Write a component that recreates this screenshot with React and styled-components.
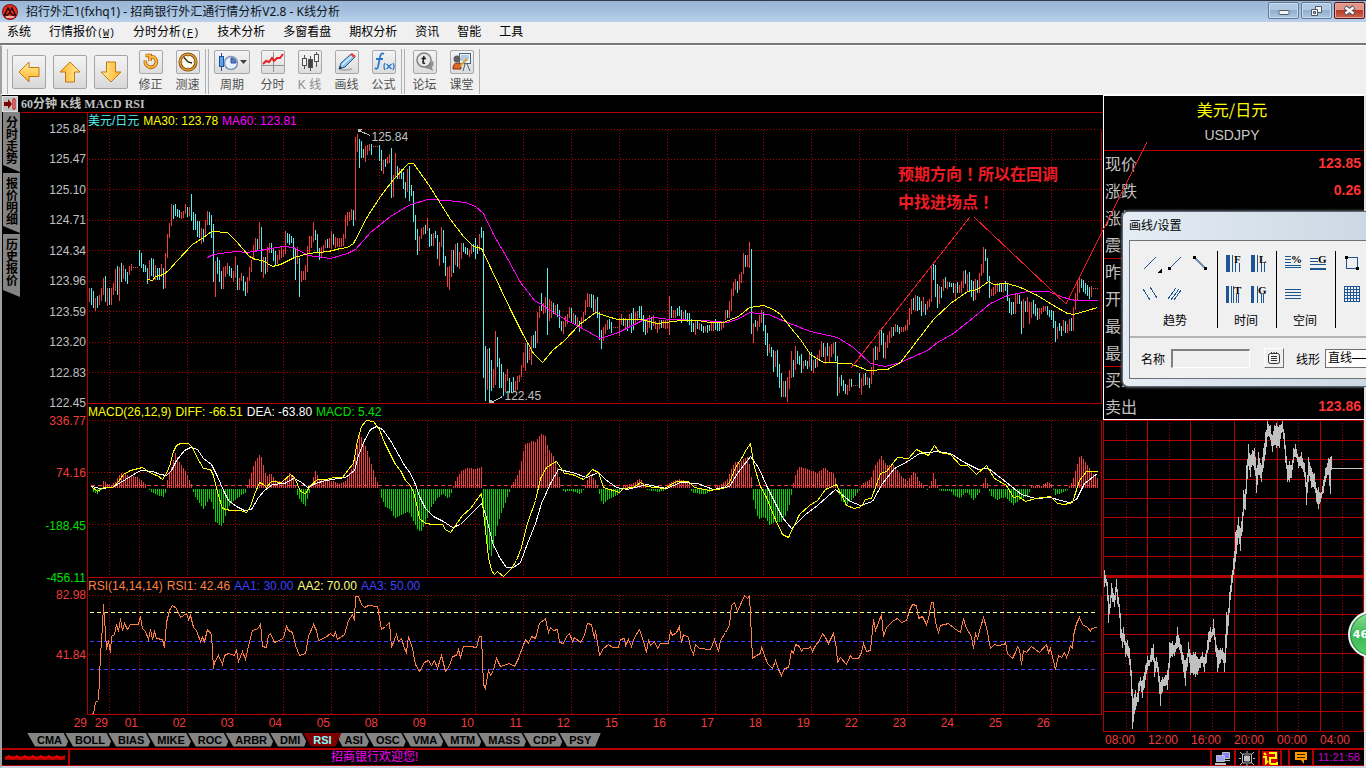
import React from "react";
import styled, { createGlobalStyle, css } from "styled-components";

const SONG = '"Liberation Sans", "Noto Sans CJK SC", sans-serif';
const RED = "#b40000";
const UP = "#f03c3c";
const DOWN = "#54f0f0";

const GlobalStyle = createGlobalStyle`
  * { box-sizing: border-box; }
  html, body { margin: 0; padding: 0; background: #000; }
  body { font-family: ${SONG}; font-size: 12px; color: #000; overflow: hidden; }
  button { font: inherit; padding: 0; margin: 0; border: 0; background: none; color: inherit; }
  svg { display: block; flex: none; }
`;

/* ---------- window frame ---------- */

const Window = styled.div`
  min-height: 100vh;
  display: flex;
  flex-direction: column;
  background: #000;
  position: relative;
  overflow: hidden;
`;

const TitleBar = styled.header`
  height: 22px;
  display: flex;
  align-items: center;
  padding: 0 1px 0 2px;
  gap: 8px;
  border-top: 1px solid #343a44;
  background: linear-gradient(#98b5d6, #a8c3e0 60%, #bad1ea);
`;

const WindowTitle = styled.h1`
  margin: 0;
  flex: 1;
  font: 400 12px/18px "Noto Sans", "Noto Sans CJK SC", sans-serif;
  color: #10141c;
`;

const WindowButtons = styled.div`
  display: flex;
  gap: 2px;
  align-self: flex-start;
  padding-top: 1px;
`;

const WindowButton = styled.button`
  width: 31px;
  height: 17px;
  display: flex;
  align-items: center;
  justify-content: center;
  border-radius: 2px;
  border: 1px solid ${(p) => (p.$close ? "#5c1420" : "#647896")};
  box-shadow: inset 0 0 0 1px ${(p) => (p.$close ? "#e8a898" : "#c8dcf0")};
  background: ${(p) =>
    p.$close
      ? "linear-gradient(#e0968a 45%, #b83c22 50%, #c86450)"
      : "linear-gradient(#b0c8e2 45%, #90aece 50%, #acc8e2)"};
`;

const MenuBar = styled.nav`
  height: 23px;
  display: flex;
  align-items: flex-start;
  gap: 18px;
  padding: 1px 7px 0;
  background: #f0f0f0;
  border-bottom: 2px solid #787878;
`;

const MenuItem = styled.button`
  font-size: 12px;
  line-height: 19px;
  white-space: nowrap;
`;

const Hotkey = styled.span`
  font: 10px/18px "Liberation Mono", monospace;
  u { text-underline-offset: 1px; }
`;

const ToolBar = styled.div`
  height: 50px;
  display: flex;
  align-items: stretch;
  padding: 3px 0 0 5px;
  background: #f0f0f0;
  border-left: 2px solid #a0a0a0;
  border-top: 1px solid #fff;
  border-bottom: 1px solid #fff;
`;

const ToolGroup = styled.div`
  display: flex;
  align-items: center;
  padding: 0 2px 0 4px;
  gap: 6px;
  border-left: 1px solid #b0b0b0;
  border-right: 1px solid #b0b0b0;
  margin-right: 2px;
`;

const ArrowButton = styled.button`
  width: 34px;
  height: 34px;
  margin: 0 1px 0 0;
  display: flex;
  align-items: center;
  justify-content: center;
  border: 1px solid #a4a4a4;
  border-radius: 2px;
  background: linear-gradient(#f4f4f4, #d8d8d8);
`;

const ToolItem = styled.button`
  width: ${(p) => (p.$wide ? 38 : 31)}px;
  display: flex;
  flex-direction: column;
  align-items: center;
  gap: 2px;
  font-size: 12px;
  line-height: 18px;
  white-space: nowrap;
  color: ${(p) => (p.$dim ? "#8c8c8c" : "#505050")};
`;

const ToolIcon = styled.span`
  width: ${(p) => (p.$wide ? 36 : 24)}px;
  height: 24px;
  display: flex;
  align-items: center;
  justify-content: center;
  border: 1px solid #a8a8a8;
  border-radius: 2px;
  background: linear-gradient(#f4f4f4, #dcdcdc);
`;

/* ---------- workspace ---------- */

const Workspace = styled.main`
  flex: 1;
  display: flex;
  position: relative;
  border-left: 2px solid #a0a0a0;
  border-right: 2px solid #e4e4e4;
  background: #000;
`;

const ChartSide = styled.section`
  flex: 1;
  min-width: 0;
  display: flex;
  flex-direction: column;
`;

const ChartHeader = styled.div`
  height: 17px;
  display: flex;
  align-items: center;
  gap: 3px;
`;

const PinButton = styled.button`
  width: 16px;
  height: 16px;
  background: #c0c0c0;
  border: 1px solid #e0e0e0;
`;

const ChartTitle = styled.h2`
  margin: 0;
  font: 700 12px/16px "Liberation Serif", "Noto Sans CJK SC", serif;
  color: #c0c0c0;
`;

const ChartBody = styled.div`
  display: flex;
`;

const SideTabs = styled.div`
  width: 19px;
  padding-left: 1px;
  display: flex;
  flex-direction: column;
  gap: 1px;
`;

const SideTab = styled.button`
  width: 17px;
  height: ${(p) => (p.$tall ? 63 : 60)}px;
  padding-top: 4px;
  display: flex;
  align-items: center;
  writing-mode: vertical-rl;
  white-space: nowrap;
  font: 700 12px/16px "Noto Sans CJK SC", sans-serif;
  background: #848484;
  clip-path: polygon(0 0, 100% 0, 100% 100%, 0 calc(100% - 7px));
`;

const Panes = styled.div`
  flex: 1;
  min-width: 0;
  border-top: 1px solid ${RED};
`;

const Pane = styled.div`
  display: flex;
  align-items: flex-start;
  height: ${(p) => p.$height}px;
`;

const Axis = styled.div`
  width: 66px;
  height: ${(p) => p.$height}px;
  margin-top: ${(p) => p.$top}px;
  display: flex;
  flex-direction: column;
  justify-content: space-between;
  text-align: right;
  line-height: 16px;
  flex: none;
  z-index: 1;
`;

const AxisLabel = styled.span`
  color: ${(p) => p.$color};
  padding-right: 1px;
`;

const Plot = styled.div`
  flex: 1;
  min-width: 0;
  height: 100%;
  border-left: 1px solid ${RED};
  display: flex;
  flex-direction: column;
`;

const PlotSvg = styled.svg`
  width: 100%;
  overflow: visible;
`;

const Legend = styled.div`
  height: ${(p) => p.$height || 16}px;
  line-height: ${(p) => p.$height || 16}px;
  display: flex;
  gap: 4px;
  white-space: nowrap;
`;

const LegendItem = styled.span`
  color: ${(p) => p.$color};
`;

const DateRow = styled.div`
  display: grid;
  grid-template-columns: 67px 21fr 30fr repeat(19, 48fr) 52fr;
  color: ${UP};
  line-height: 16px;
  text-align: right;
  span { padding-right: 1px; }
`;

const IndicatorTabs = styled.div`
  display: flex;
  padding-left: 23px;
  margin-top: 1px;
`;

const IndicatorTab = styled.button`
  height: 15px;
  margin-right: -9px;
  padding-left: 2px;
  background: #000;
  position: relative;
  z-index: ${(p) => (p.$active ? 2 : 1)};
  clip-path: polygon(0 0, 100% 0, calc(100% - 6px) 100%, 8px 100%);
  span {
    display: block;
    height: 14px;
    padding: 0 10px;
    font: 700 11px/15px "Liberation Sans", sans-serif;
    color: ${(p) => (p.$active ? "#80ffff" : "#000")};
    background: ${(p) => (p.$active ? "#800000" : "#848484")};
    clip-path: polygon(0 0, 100% 0, calc(100% - 6px) 100%, 8px 100%);
  }
`;

/* ---------- quote side ---------- */

const QuoteSide = styled.aside`
  width: 261px;
  flex: none;
`;

const QuotePanel = styled.div`
  height: 325px;
  border: solid #fff;
  border-width: 1px 0 1px 1px;
`;

const QuoteHead = styled.div`
  height: 55px;
  text-align: center;
  padding-right: 4px;
  border-bottom: 1px solid ${RED};
`;

const PairName = styled.div`
  font: 400 16px/27px "Noto Sans CJK SC", sans-serif;
  color: #ffff00;
`;

const PairCode = styled.div`
  font-size: 14px;
  line-height: 25px;
  color: #c8c8c8;
`;

const QuoteRow = styled.div`
  height: 27px;
  padding: 0 3px 3px 1px;
  display: flex;
  justify-content: space-between;
  align-items: center;
  ${(p) => p.$divided && css`border-bottom: 1px solid ${RED};`}
`;

const QuoteLabel = styled.span`
  font: 400 16px/24px "Noto Sans CJK SC", sans-serif;
  color: #c0c0c0;
`;

const QuoteValue = styled.span`
  font-size: 14px;
  font-weight: 700;
  color: #ff3232;
`;

const TimeRow = styled.div`
  display: flex;
  padding-left: 2px;
  line-height: 16px;
  color: ${UP};
  span { flex: 0 0 43px; white-space: nowrap; }
`;

/* ---------- overlays ---------- */

const Annotation = styled.div`
  position: absolute;
  left: 896px;
  top: 64px;
  width: 180px;
  font: 700 16px/28px "Noto Sans CJK TC", sans-serif;
  color: #ee1c24;
`;

const TrendOverlay = styled.svg`
  position: absolute;
  left: 0;
  top: 0;
  width: 100%;
  height: 100%;
  pointer-events: none;
`;

const Dialog = styled.section`
  position: absolute;
  right: -2px;
  top: 116px;
  width: 244px;
  height: 176px;
  padding: 0 0 7px 6px;
  display: flex;
  flex-direction: column;
  border: 1px solid #5c6670;
  border-right: 0;
  border-radius: 6px 0 0 6px;
  background: linear-gradient(90deg, #e4ecf4, #ccd8e4);
  box-shadow: 0 0 3px #a0a8b0;
`;

const DialogTitle = styled.h3`
  margin: 0;
  font: 400 12px/28px "Noto Sans", "Noto Sans CJK SC", sans-serif;
`;

const DialogBody = styled.div`
  flex: 1;
  background: #f0f0f0;
  border: 1px solid #6c7278;
  border-right: 0;
  display: flex;
  flex-direction: column;
`;

const DrawTools = styled.div`
  height: 97px;
  display: flex;
  padding: 10px 0 8px 9px;
  border-bottom: 2px solid #b4b4b4;
`;

const DrawGroup = styled.div`
  width: ${(p) => p.$width}px;
  flex: none;
  padding-left: ${(p) => p.$indent}px;
  border-right: 1px solid #000;
  display: flex;
  flex-direction: column;
  gap: 7px;
`;

const DrawRow = styled.div`
  display: flex;
  gap: 1px;
  height: 24px;
`;

const DrawButton = styled.button`
  width: 24px;
  height: 24px;
`;

const DrawCaption = styled.div`
  line-height: 16px;
  padding-left: ${(p) => p.$indent}px;
`;

const DialogForm = styled.div`
  flex: 1;
  display: flex;
  align-items: center;
  padding-left: 11px;
  overflow: hidden;
`;

const NameInput = styled.input`
  width: 79px;
  flex: none;
  height: 19px;
  margin: 0 14px 0 6px;
  background: #f0f0f0;
  border: 1px solid #fff;
  border-top: 2px solid #808080;
  border-left: 2px solid #808080;
  font: 12px ${SONG};
`;

const ListButton = styled.button`
  width: 20px;
  flex: none;
  height: 20px;
  margin-right: 12px;
  display: flex;
  align-items: center;
  justify-content: center;
  border: 1px solid #fff;
  border-right-color: #707070;
  border-bottom-color: #707070;
`;

const LineSelect = styled.select`
  width: 90px;
  flex: none;
  height: 19px;
  margin-left: 5px;
  padding: 0 0 0 2px;
  background: #fff;
  border: 1px solid #707070;
  border-radius: 0;
  appearance: none;
  font: 12px ${SONG};
`;

const FieldLabel = styled.label`
  flex: none;
`;

const SpeedBall = styled.button`
  position: absolute;
  right: -31px;
  top: 516px;
  width: 47px;
  height: 47px;
  padding-right: 22px;
  border: 2px solid #f4f4f4;
  border-radius: 50%;
  box-shadow: inset 0 0 0 1px #208040;
  background: linear-gradient(#90e090, #3cb858 50%, #54d068);
  font: 700 11px "DejaVu Sans", sans-serif;
  color: #fff;
`;

/* ---------- status bar ---------- */

const StatusBar = styled.footer`
  height: 20px;
  display: flex;
  border: solid #a0a0a0;
  border-width: 0 2px 2px 2px;
  border-bottom-color: #c4d4e4;
  border-right-color: #e4e4e4;
  box-shadow: inset 0 2px ${RED}, inset 0 -1px ${RED};
  background: #000;
`;

const StatusCell = styled.div`
  width: ${(p) => p.$width}px;
  padding-top: 2px;
  display: flex;
  align-items: center;
  justify-content: center;
  border-right: ${(p) => (p.$last ? 0 : 2)}px solid ${RED};
  flex: none;
`;

const StatusMessage = styled.div`
  flex: 1;
  padding: 1px 0 0 261px;
  line-height: 16px;
  color: #ff00ff;
  border-right: 2px solid ${RED};
`;

const Clock = styled.time`
  font-size: 11px;
  line-height: 14px;
  padding-bottom: 2px;
  color: #c800c8;
`;

/* ---------- data ---------- */

const candleRuns = [
  [89, "r287301 c287304 c290307 r297310 c295307 r294304 r287300 r277294 c275301 r287305 c287304 r287304 r282294 r268290 c265294 r266300 c262281 r264278 c268280 c271283 r265274 r263270 d267 d267 d267"],
  [139, "c249265 c252267 c263271 c264271 c267283 r259279 c257275 c258276 r264279 c267279 c267279 r263276 c267288 r252287 r233257 r222237 r203225 c204218 c203215 c208216 c209217 r211218 r210217 r203213"],
  [187, "c206216 r206215 c193220 c211229 c213229 c220236 c220237 r227243 c228241 r219236 r210224 c211224 c214237 c223281 r260296 c256273 c259281 c270288 r266288 r265276 r262273 c265275 c267277 r270281"],
  [235, "r256277 c264289 r277289 r272280 c275290 c281295 r276292 r266280 r259271 r244259 r237250 c238250 r221248 c226271 r256277 c256273 r246271 r242252 c242252 c247260 c250264 r254263 r249259 r246257"],
  [283, "r248256 r230253 c232242 c233244 c235242 c237258 c248279 r246263 c257296 r270281 r270279 r264279 r245271 r235252 r235247 r221241 c229239 c233252 c247259 r246256 r244252 r239247 c238247 r237247"],
  [331, "r230248 c233244 r236247 r237246 r237246 r237246 r233245 r214238 r211225 r211220 r208219 c209225 r136219 r133151 c138167 c140157 c148157 r145161 r144154 r143150 c143154 d146 d146 d146"],
  [379, "c144160 c149170 r159173 c158166 r156163 r153162 c147197 r174196 r152177 c165178 r167178 c168178 c171188 c181197 r168191 c165200 c184195 c190221 c214239 c228254 r235250 r227238 r226234 c224233"],
  [427, "r217230 c227246 c233245 r232245 c230237 c234258 r241265 r226246 c229262 c255275 r266286 r265289 r249276 c249272 r243264 c242266 r251268 r242258 c242251 c246253 c247254 r249256 r243253 c243251"],
  [475, "c237258 c244253 r233250 c226237 c230377 c345400 r348389 c347402 c359390 r368387 r330384 c336366 c357387 c363387 c371395 r373391 r368380 c377392 c381392 c376391 r380390 r375389 r374381 r364376"],
  [523, "r352366 r342370 c342362 r347359 r335364 c334347 c330347 r311342 r305317 c292310 r302313 r296312 c267334 r298320 r300317 c302313 r304314 c303316 c309327 c320330 r320333 r315326 r313323 r306317"],
  [571, "c307322 r312323 c314324 r316325 c320331 r316327 r311322 r299314 r292306 r293306 c293307 c294311 r298313 c296317 c311339 c329348 r326340 r323333 r319329 c318328 c321332 d327 d327 d327"],
  [619, "r317335 r313324 c317325 r317327 c318330 r313327 c312332 c307329 r311322 r310320 c305317 c305319 c314331 c319334 r317332 r314327 c316329 r314325 r320328 r322332 r319328 c319327 r319327 r319328"],
  [667, "r319327 r295334 c305317 r309317 r309317 c307315 c305315 c309322 r311320 c309319 c312321 c312324 c318331 c322331 r320334 c320328 r322329 c323330 c325332 r325331 c324332 c324330 r322330 r320330"],
  [715, "c318329 c321330 c322330 r320329 r320327 r309319 c309317 r300317 r288310 r281295 r278289 c280292 r273289 r271282 r252273 c254266 r254266 r241267 c248333 r322342 c319326 r320330 r314326 r309322"],
  [763, "c311330 c324344 c332355 r343352 c346356 c349371 r350366 c349376 c363387 c372396 r380396 c380396 r376401 r369388 r350377 c359376 r345369 c350363 c355364 c353372 r360368 c359365 c360368 r351366"],
  [811, "c351370 r359372 c358367 r354366 r349359 r340356 c342356 r346363 c342355 r345362 r343356 r342353 c341360 c355395 r376392 c374385 c379390 c383393 r384394 r378390 c378386 d385 d385 d385"],
  [859, "c372387 r377394 r373385 c372384 r376384 c377387 r366383 r347374 c345359 r346359 r329351 c329344 c332357 r341358 r334347 r330342 r326337 c326335 r323331 c324331 c326333 r326331 r326331 r324330"],
  [907, "r319329 r307324 r298313 c297309 r294310 c295310 c296309 c300315 r296311 c303314 r300309 r298306 r266301 c262279 c264296 c283307 r285303 c286297 r278290 c276287 r281288 c281286 c282286 c282292"],
  [955, "r283297 c281292 r284292 r280292 r270287 c269283 r273290 c271291 c279296 c280300 r278299 c279292 r272292 r263275 r246272 c248260 c257280 c275297 r288295 r286295 r283293 r282291 c282291 c283291"],
  [1003, "r283291 c280290 c283300 c297312 c301314 c301313 r292313 r292303 c294303 c300333 r298327 c300311 r296311 r301323 r301317 c299313 c303315 c307319 r307318 r307313 r305311 r305310 c305314 c309316"],
  [1051, "c309319 c310327 c320341 r326338 c322330 c325335 r319330 c320332 r323332 r318330 c317330 r306330 r292309 r280299 r277292 c278287 c279291 c282293 c284295 c286298 r285296 d288 d288 d288"],
];

const candles = candleRuns.flatMap(([start, text]) =>
  text.split(" ").map((bar, i) => ({
    x: start + i * 2,
    kind: bar[0],
    high: Number(bar.slice(1, 4)),
    low: Number(bar.slice(4, 7) || 0),
  }))
);

const ma30 =
  "147,279 152,280 155,276 163,274 168,270 177,260 192,244 203,237 211,231 227,232 236,241 249,256 255,259 262,260 272,266 280,264 294,257 308,253 328,251 340,248 347,247 353,243 367,216 380,196 393,179 408,163 413,163 428,184 440,203 450,219 463,236 473,246 481,248 490,267 500,288 510,309 522,333 533,353 542,362 553,349 563,341 579,324 595,312 607,316 617,319 640,319 657,323 680,320 697,320 710,322 723,322 738,316 749,307 763,305 773,309 780,314 790,327 800,339 810,354 823,362 850,363 867,370 887,369 900,362 913,345 933,319 950,303 967,291 977,289 988,281 993,284 1007,283 1020,287 1037,295 1053,305 1067,313 1073,314 1087,310 1097,307";
const ma60 =
  "207,257 213,254 227,252 236,251 247,252 283,246 293,247 308,255 330,258 340,255 347,253 355,249 370,232 390,216 408,205 427,199 447,200 465,202 475,206 483,213 493,234 507,258 520,282 535,301 540,303 548,309 563,318 580,327 600,338 618,332 642,320 653,317 670,319 703,320 727,322 739,318 749,312 768,314 787,322 810,331 837,337 853,347 870,363 885,366 900,362 927,350 937,342 953,333 973,317 990,303 1007,295 1027,291 1048,291 1063,297 1075,300 1097,300";

const macdAnchors = [
  [91, 0], [93, -3], [97, -5], [101, -1], [103, 6], [107, 3], [111, 2], [115, 5], [120, 14], [130, 11], [137, 10], [143, 5], [147, 0],
  [153, -4], [160, -7], [164, -9], [166, 0], [168, 13], [171, 20], [175, 34], [180, 23], [186, 14], [190, 5], [192, 0], [194, -6],
  [198, -13], [203, -20], [209, -10], [212, -14], [215, -33], [222, -38], [227, -20], [233, -12], [240, -7], [246, -3], [249, 8],
  [254, 24], [260, 34], [263, 22], [266, 10], [270, 14], [276, 6], [283, 5], [289, 14], [293, 10], [296, -4], [300, -12], [305, -17],
  [308, -7], [311, 3], [315, 16], [319, 8], [325, 8], [332, 6], [340, 3], [346, 7], [352, 20], [355, 30], [359, 53], [363, 46],
  [368, 33], [375, 10], [379, 0], [381, -9], [385, -18], [390, -20], [394, -29], [402, -26], [408, -22], [413, -32], [418, -42],
  [421, -42], [425, -35], [430, -20], [437, -9], [443, -5], [448, -10], [452, -2], [456, 8], [462, 17], [468, 19], [474, 18],
  [481, 20], [483, -20], [486, -52], [491, -67], [494, -55], [496, -40], [500, -27], [505, -14], [509, -3], [511, 2], [516, 9],
  [520, 19], [522, 33], [525, 43], [529, 44], [532, 47], [535, 45], [540, 53], [545, 51], [548, 38], [552, 33], [556, 24], [559, 10],
  [561, 0], [564, -3], [570, -2], [580, -5], [584, 0], [588, 9], [591, 11], [596, 6], [599, -5], [602, -16], [607, -11], [613, -8],
  [618, -5], [623, 1], [633, 4], [640, 9], [645, 1], [646, -1], [658, -3], [666, -1], [670, 5], [679, 8], [688, 5], [692, -4],
  [705, -5], [715, 1], [720, 2], [727, 8], [731, 18], [735, 25], [739, 24], [743, 28], [748, 30], [751, 10], [752, -5], [754, -17],
  [758, -31], [764, -27], [769, -36], [774, -33], [782, -33], [786, -25], [790, -13], [792, 0], [794, 7], [796, 16], [799, 20],
  [807, 18], [817, 14], [824, 20], [829, 15], [834, 14], [836, 3], [838, -3], [841, -12], [847, -15], [854, -8], [859, -1], [862, 4],
  [870, 7], [874, 20], [881, 31], [886, 22], [894, 22], [901, 11], [907, 6], [914, 16], [919, 6], [925, 0], [926, -2], [930, 2],
  [933, 14], [937, 2], [940, -2], [950, -2], [954, -7], [960, -9], [966, -3], [973, -11], [979, -4], [982, 2], [985, 9], [988, 2],
  [990, -6], [996, -11], [1005, -8], [1013, -16], [1019, -11], [1027, -7], [1031, 1], [1041, 1], [1046, 5], [1052, 3], [1054, -6],
  [1062, -4], [1068, -1], [1071, 4], [1074, 12], [1079, 30], [1081, 31], [1086, 24], [1092, 14], [1098, 8],
];

function valueAt(anchors, x, column) {
  const next = anchors.findIndex((a) => a[0] >= x);
  if (next <= 0) return anchors[0][column];
  const a = anchors[next - 1];
  const b = anchors[next];
  return a[column] + ((b[column] - a[column]) * (x - a[0])) / (b[0] - a[0]);
}

const macdBars = [];
for (let x = 91; x <= 1097; x += 2) {
  macdBars.push({ x, h: Math.round(valueAt(macdAnchors, x, 1)) });
}

const diffLine =
  "91,486 97,491 103,487 112,487 118,481 123,474 130,470 142,467 148,471 153,474 157,475 162,479 166,473 170,463 173,451 176,445 180,443 188,443 192,447 196,456 203,468 210,469 213,475 217,492 222,508 230,510 240,510 246,512 250,506 254,494 259,482 263,484 266,487 271,481 281,482 290,474 294,477 300,491 305,493 310,485 317,479 325,479 334,477 342,477 348,469 353,463 357,440 361,426 366,420 373,421 379,429 384,442 390,454 395,464 400,470 405,480 410,485 413,492 416,503 419,518 425,523 433,524 442,524 445,529 450,532 455,525 462,515 470,508 481,493 485,530 488,557 491,570 494,574 497,571 503,576 511,568 516,560 521,547 527,523 535,500 540,478 546,467 556,461 564,473 572,474 583,479 592,469 598,472 603,487 619,492 623,488 633,487 640,482 646,486 664,488 676,481 688,481 694,487 709,490 723,488 729,482 735,467 741,458 746,449 750,443 754,467 760,486 766,497 774,517 782,534 788,537 799,514 809,505 817,500 825,489 836,484 846,505 854,508 861,506 865,499 871,498 880,473 886,471 897,457 908,458 916,449 928,455 934,445 939,452 950,454 960,465 967,465 976,474 986,465 994,478 1006,485 1013,497 1018,496 1025,501 1035,498 1050,496 1057,503 1064,504 1072,502 1079,480 1086,471 1097,471";
const deaLine =
  "91,486 100,488 112,487 120,482 130,476 140,470 152,471 160,474 166,475 171,470 176,460 184,450 190,447 197,449 203,458 211,464 217,476 223,490 228,500 236,506 244,510 251,509 258,497 264,490 272,484 284,483 293,478 300,481 307,487 315,483 325,480 345,477 354,470 358,455 364,440 370,429 376,426 382,429 390,440 398,454 404,465 410,473 415,484 419,496 425,508 433,516 443,521 452,527 460,524 470,514 481,503 486,517 492,542 499,557 506,567 513,567 520,562 527,543 535,523 541,503 550,483 558,469 572,472 586,477 598,472 605,479 616,487 627,489 646,484 666,488 680,482 697,483 713,489 729,486 737,473 750,456 758,467 767,487 774,501 782,517 791,528 805,514 817,505 835,489 850,501 860,505 872,501 882,483 894,468 907,461 919,453 937,451 950,453 964,462 978,469 988,468 1001,478 1011,486 1021,494 1035,498 1050,497 1060,500 1069,502 1076,499 1084,483 1097,473";
const rsiLine =
  "91,713 93,713 95,702 98,700 100,655 102,625 103,604 105,632 106,649 108,640 110,652 111,636 114,634 116,624 118,631 120,618 122,630 124,623 127,629 130,624 138,624 140,616 142,628 145,631 148,639 150,629 152,639 154,631 156,638 162,639 164,647 166,622 169,610 172,605 176,608 180,617 186,613 188,619 190,615 193,627 196,630 200,641 202,637 204,641 207,629 211,634 213,668 214,662 218,655 222,664 224,655 228,653 234,655 236,649 238,661 242,651 245,659 249,641 252,630 258,628 260,623 262,646 266,647 268,635 270,633 274,642 283,638 286,626 288,630 292,632 295,645 299,655 305,653 308,636 313,624 316,630 318,640 325,637 330,633 333,636 335,632 337,639 344,634 348,620 352,614 354,620 355,596 358,596 361,604 364,607 368,605 377,606 381,629 385,626 389,622 391,647 396,634 398,641 401,638 404,648 406,652 408,636 412,648 415,664 419,671 424,662 428,660 431,665 434,660 437,668 441,655 445,671 449,665 452,656 456,655 458,649 460,657 463,646 470,646 476,647 479,636 481,636 483,684 485,688 488,670 490,675 493,670 496,658 500,666 509,663 514,666 518,658 522,647 525,639 528,643 531,636 535,638 539,623 545,618 548,632 550,627 553,630 557,629 559,642 563,643 566,636 569,633 572,641 574,637 580,642 584,635 587,623 591,624 594,638 595,630 597,642 599,655 603,648 608,644 612,647 618,647 620,639 624,638 625,645 628,639 631,646 634,637 639,629 643,641 646,652 648,639 650,645 654,641 657,648 660,643 668,643 670,631 672,635 676,632 679,626 681,642 683,634 688,637 690,647 693,654 695,644 699,648 710,649 714,639 718,651 720,640 725,632 729,625 731,605 734,602 737,611 741,602 744,595 747,598 749,595 750,615 752,658 756,655 760,653 761,646 764,655 767,663 772,668 775,660 778,669 781,675 784,668 788,667 791,650 793,653 795,644 799,646 801,651 803,648 808,648 810,646 812,651 815,645 819,640 822,633 825,637 828,643 833,633 836,648 837,662 840,657 846,664 850,655 852,658 858,658 861,652 863,643 866,651 870,650 873,619 875,630 878,622 881,614 883,636 886,627 892,621 897,618 901,622 906,620 909,610 912,604 916,605 918,618 922,616 926,624 928,618 931,602 933,602 935,622 938,632 940,625 948,623 954,628 960,632 963,618 966,628 971,636 973,648 975,633 977,638 980,627 983,617 986,627 990,648 994,644 997,645 1004,644 1005,642 1007,653 1012,658 1015,652 1017,646 1019,649 1021,664 1023,650 1026,652 1031,646 1039,652 1046,644 1048,652 1050,648 1055,669 1058,655 1061,657 1064,652 1066,657 1068,652 1070,645 1072,648 1073,635 1076,623 1079,617 1082,624 1087,627 1090,631 1091,628 1097,627";

/* intraday range per moment: x, high, low, in thirds of a pixel */
const intraday = [
  [29, 465, 517], [33, 480, 505], [37, 500, 530], [42, 570, 625], [46, 550, 580], [50, 505, 550], [54, 518, 560], [59, 540, 577],
  [64, 492, 530], [69, 530, 568], [74, 570, 600], [78, 630, 670], [82, 655, 700], [87, 637, 680], [93, 680, 725], [98, 675, 722],
  [104, 700, 750], [109, 765, 810], [114, 850, 943], [121, 825, 885], [126, 845, 872], [131, 805, 860], [136, 785, 812],
  [142, 795, 850], [148, 770, 820], [153, 750, 795], [158, 722, 765], [164, 735, 752], [169, 700, 740], [175, 688, 740],
  [180, 735, 785], [186, 725, 760], [191, 755, 800], [196, 800, 872], [202, 785, 830], [208, 785, 812], [213, 780, 812],
  [219, 765, 824], [225, 680, 740], [232, 677, 725], [240, 690, 722], [248, 636, 700], [254, 670, 705], [260, 690, 735],
  [266, 720, 770], [271, 735, 812], [277, 715, 755], [281, 680, 725], [288, 715, 780], [295, 712, 780], [302, 712, 785],
  [309, 725, 780], [316, 725, 760], [322, 712, 745], [328, 725, 772], [334, 705, 745], [340, 650, 705], [346, 636, 680],
  [351, 650, 670], [356, 612, 660], [363, 680, 710], [369, 700, 772], [376, 700, 745], [383, 700, 735], [390, 715, 772],
  [394, 590, 700], [399, 600, 660], [404, 530, 590], [410, 480, 530], [417, 430, 480], [423, 350, 440], [431, 307, 370],
  [436, 340, 407], [442, 300, 350], [447, 225, 290], [451, 235, 285], [456, 150, 220], [461, 88, 150], [466, 120, 185],
  [472, 105, 150], [480, 98, 165], [486, 160, 235], [492, 112, 180], [499, 150, 200], [506, 100, 160], [513, 50, 120],
  [519, 17, 65], [526, 30, 75], [532, 60, 112], [539, 30, 90], [545, 25, 100], [553, 30, 100], [562, 17, 50], [568, 55, 90],
  [573, 110, 145], [578, 150, 200], [584, 137, 200], [590, 150, 190], [597, 100, 135], [603, 88, 125], [611, 125, 160],
  [620, 112, 160], [629, 145, 185], [636, 200, 270], [642, 125, 180], [650, 160, 220], [659, 175, 222], [665, 220, 260],
  [671, 215, 283], [678, 235, 262], [685, 195, 235], [693, 160, 200], [700, 130, 180], [706, 125, 237], [710, 122, 160],
];

const intradayBars = [];
for (let x = 29; x <= 710; x += 3) {
  const near = intraday.find((p) => Math.abs(p[0] - x) < 2);
  const high = near ? near[1] : valueAt(intraday, x, 1) + 6;
  const low = near ? near[2] : valueAt(intraday, x, 2) - 6;
  intradayBars.push({ x, high, low });
}

const dayLines = [109, ...Array.from({ length: 20 }, (_, i) => 139 + i * 48)];
const dates = "29 01 02 03 04 05 08 09 10 11 12 15 16 17 18 19 22 23 24 25 26".split(" ");
const priceLevels = ["125.84", "125.47", "125.10", "124.71", "124.34", "123.96", "123.59", "123.20", "122.83", "122.45"];
const indicators = "CMA BOLL BIAS MIKE ROC ARBR DMI RSI ASI OSC VMA MTM MASS CDP PSY".split(" ");
const quotes = [
  ["现价", "123.85"], ["涨跌", "0.26"], ["涨幅", ""], ["震幅", "", true],
  ["昨收", ""], ["开盘", ""], ["最高", ""], ["最低", "", true],
  ["买入", ""], ["卖出", "123.86"],
];

/* ---------- chart parts ---------- */

function Grid({ top, bottom, rows }) {
  return (
    <g stroke={RED} strokeDasharray="1 2">
      {rows.map((y) => <line key={y} x1="88" x2="1101" y1={y} y2={y} />)}
      {dayLines.map((x) => <line key={x} x1={x} x2={x} y1={top} y2={bottom} />)}
      <path d={`M1101 ${top}V${bottom}H87`} fill="none" strokeDasharray="none" />
    </g>
  );
}

function PlotArea({ top, height, children }) {
  return (
    <PlotSvg height={height} viewBox={`88 ${top} 1015 ${height}`} preserveAspectRatio="none" shapeRendering="crispEdges">
      <g transform="translate(.5 .5)" fill="none">{children}</g>
    </PlotSvg>
  );
}

function PricePlot() {
  return (
    <PlotArea top={129} height={275}>
      <Grid top={129} bottom={403} rows={[129, 159, 189, 220, 250, 281, 311, 342, 372]} />
      {candles.map((c) =>
        c.kind === "d"
          ? <rect key={c.x} x={c.x - 0.5} y={c.high - 0.5} width="1" height="1" fill={UP} />
          : <line key={c.x} x1={c.x} x2={c.x} y1={c.high} y2={c.low} stroke={c.kind === "r" ? UP : DOWN} />
      )}
      <polyline points={ma60} stroke="#ff00ff" />
      <polyline points={ma30} stroke="#ffff00" />
      <g stroke="#c0c0c0">
        <path d="M358 130L370 135M357 129h4M357 130h3M357 131h2" />
        <path d="M491 402L502 396M489 402h4M489 401h3M489 400h2" />
      </g>
      <g fill="#c0c0c0" fontSize="12" fontFamily="Liberation Sans">
        <text x="371" y="140">125.84</text>
        <text x="504" y="399">122.45</text>
      </g>
    </PlotArea>
  );
}

function MacdPlot() {
  return (
    <PlotArea top={420} height={158}>
      <Grid top={420} bottom={577} rows={[420, 472, 524]} />
      <path d="M90 485H1098" stroke={UP} strokeDasharray="4 3" />
      {macdBars.filter((b) => b.h).map((b) => (
        <line
          key={b.x} x1={b.x} x2={b.x}
          y1={b.h > 0 ? 486 - b.h : 488} y2={b.h > 0 ? 487 : 488 - b.h}
          stroke={b.h > 0 ? UP : "#00d800"}
        />
      ))}
      <polyline points={deaLine} stroke="#fff" />
      <polyline points={diffLine} stroke="#ffff00" />
    </PlotArea>
  );
}

function RsiPlot() {
  return (
    <PlotArea top={595} height={120}>
      <Grid top={595} bottom={714} rows={[595, 654]} />
      <g strokeDasharray="4 3">
        <path d="M89 612H1095" stroke="#ffff80" />
        <path d="M89 641H1095M89 669H1095" stroke="#4040ff" />
      </g>
      <polyline points={rsiLine} stroke="#ff8040" />
    </PlotArea>
  );
}

function IntradayPlot() {
  return (
    <PlotSvg height="312" viewBox="24 15 783 936" preserveAspectRatio="none" shapeRendering="crispEdges">
      <g fill="none" stroke={RED} strokeWidth="3">
        <path d="M25.5 16.5H805.5V949.5H25.5Z" />
        {[76, 133, 193, 250, 307, 367, 424, 541, 598, 658, 715, 772, 832, 889].map((y) => (
          <path key={y} d={`M25 ${y + 0.5}H805`} />
        ))}
        <path d="M25 484H805" strokeWidth="9" />
        {[157, 286, 418, 547, 676].map((x) => <path key={x} d={`M${x} 16V951`} />)}
        {[94, 223, 352, 481, 610, 742].map((x) => (
          <path key={x} d={`M${x} 24V948`} strokeDasharray="3 6" />
        ))}
      </g>
      <g stroke="#c0c0c0" strokeWidth="3">
        {intradayBars.map((b) => <line key={b.x} x1={b.x} x2={b.x} y1={b.high} y2={b.low} />)}
        <path d="M710 160H805" />
      </g>
      <polyline
        points={intraday.map((p) => `${p[0]},${(p[1] + p[2]) / 2}`).join(" ")}
        fill="none" stroke="#c0c0c0" strokeWidth="4"
      />
    </PlotSvg>
  );
}

/* ---------- icons ---------- */

const BLOCK_ARROW = "M2 12L12 2V7.500H22V16.500H12V22Z";

function BlockArrow({ turn }) {
  return (
    <svg width="24" height="24" viewBox="0 0 24 24">
      <defs>
        <linearGradient id={`gold${turn}`} x1="0" y1="0" x2="0" y2="1">
          <stop offset="0" stopColor="#fff0a0" />
          <stop offset="1" stopColor="#ffb020" />
        </linearGradient>
      </defs>
      <path d={BLOCK_ARROW} transform={`rotate(${turn} 12 12)`} fill={`url(#gold${turn})`} stroke="#c07818" />
    </svg>
  );
}

const toolIcons = {
  fix: (
    <svg width="18" height="18" viewBox="0 0 18 18" fill="none">
      <path d="M3.500 7.500a5.500 5.500 0 1 0 8-3.500H8M3.500 2.500H8V8" stroke="#a86010" strokeWidth="3.600" />
      <path d="M3.500 7.500a5.500 5.500 0 1 0 8-3.500H8M3.500 2.500H8V8" stroke="#ffb838" strokeWidth="2" />
    </svg>
  ),
  speed: (
    <svg width="20" height="20" viewBox="0 0 20 20" fill="none">
      <circle cx="10" cy="10" r="8" fill="#fffbe8" stroke="#704010" strokeWidth="3" />
      <circle cx="10" cy="10" r="8" stroke="#e8a020" strokeWidth="1.500" />
      <path d="M6 5.500L10 10L14 11" stroke="#222" strokeWidth="1.300" />
      <path d="M10 3.500v1M10 15.500v1M3.500 10h1M15.500 10h1" stroke="#555" />
    </svg>
  ),
  period: (
    <svg width="30" height="20" viewBox="0 0 30 20" fill="none">
      <path d="M4.500 1V19" stroke="#205090" />
      <rect x="2.500" y="4.500" width="4" height="10" fill="#58a8f0" stroke="#205090" />
      <circle cx="14" cy="11" r="6.500" fill="#e8f2ff" stroke="#8098b8" strokeWidth="1.500" />
      <path d="M14 11V6a5 5 0 0 1 5 5Z" fill="#5080d0" stroke="#304890" />
      <path d="M23 8h7l-3.500 4Z" fill="#404040" />
    </svg>
  ),
  tick: (
    <svg width="22" height="20" viewBox="0 0 22 20" fill="none">
      <path d="M11.500 0V20M0 13.500H22" stroke="#909090" />
      <path d="M1 12l3-3 3 1 3-4 2 3 3-3 3 0 3-4" stroke="#e82020" strokeWidth="2" />
    </svg>
  ),
  kline: (
    <svg width="20" height="20" viewBox="0 0 20 20" fill="none" stroke="#505050">
      <path d="M4.500 3V17M10.500 4V19M16.500 0V15" />
      <rect x="2.500" y="6.500" width="4" height="7" fill="#f4f4f4" />
      <rect x="8.500" y="7.500" width="4" height="8" fill="#404040" />
      <rect x="14.500" y="2.500" width="4" height="7" fill="#f4f4f4" />
    </svg>
  ),
  pen: (
    <svg width="20" height="20" viewBox="0 0 20 20">
      <path d="M2 17q6 2 13 0" stroke="#b0b0b0" strokeWidth="2" fill="none" />
      <path d="M2 17L4 11L14 2L18 5L8 15Z" fill="#88c4f4" stroke="#305880" />
      <path d="M5 13L15 4" stroke="#d8f0ff" strokeWidth="1.500" />
      <path d="M13 2.500L15 1L19 4L17 6Z" fill="#e04848" />
      <path d="M2 17L3 14L5 16Z" fill="#203040" />
    </svg>
  ),
  formula: (
    <svg width="22" height="20" viewBox="0 0 22 20" fill="none" stroke="#2878d0">
      <path d="M11 2Q8 0 7 5L5 15Q4 18 2 16M3 7h7" strokeWidth="1.800" />
      <path d="M12 11q-2 3 0 7M20 11q2 3 0 7M13.500 12l5 5M18.500 12l-5 5" strokeWidth="1.300" />
    </svg>
  ),
  forum: (
    <svg width="20" height="20" viewBox="0 0 20 20" fill="none">
      <path d="M9 15a6 5 0 0 0 5 2l4 2-1-4a5 5 0 0 0 1-6Z" fill="#909090" />
      <circle cx="9" cy="8" r="7" fill="#e8e8e8" stroke="#808080" strokeWidth="1.500" />
      <path d="M9 4L8 10q0 2 2 1M6.500 6.500H11" stroke="#202020" strokeWidth="1.600" />
    </svg>
  ),
  lesson: (
    <svg width="20" height="20" viewBox="0 0 20 20" fill="none">
      <rect x="7.500" y="1.500" width="11" height="10" fill="#e8f4ff" stroke="#506080" />
      <path d="M9 4h8M9 6h8M9 8h7" stroke="#80a0c0" />
      <path d="M13 12l-2 7M15 12l3 7" stroke="#506080" />
      <circle cx="5" cy="7" r="3.500" fill="#606060" />
      <path d="M1 17q0-6 4-6t4 6Z" fill="#e06820" stroke="#803010" />
      <path d="M8 14L15 7" stroke="#e0a020" strokeWidth="2" />
    </svg>
  ),
};

const BLUE = "#1c5494";
const drawIcon = (content) => (
  <svg width="24" height="24" viewBox="0 0 24 24" fill="none" stroke={BLUE} shapeRendering="crispEdges">{content}</svg>
);
const letter = (ch, x = 12) => (
  <text x={x} y="12" fontFamily="Liberation Serif" fontSize="11" fontWeight="700" fill="#000" stroke="none">{ch}</text>
);
const stripes = (list) => list.map(([x, w, top = 4]) => (
  <path key={x} d={`M${x} ${top}V21`} strokeWidth={w} />
));
const drawIcons = {
  line: drawIcon(<><path d="M5 18L17 6" /><path d="M18 22h5v-5Z" fill="#000" stroke="none" /></>),
  ray: drawIcon(<><path d="M6 17L17 6" /><rect x="4" y="16" width="3" height="3" fill="#000" stroke="none" /></>),
  segment: drawIcon(<><path d="M5 6L16 17" strokeWidth="2" stroke="#7090b0" /><path d="M4 5h3v3H4ZM15 16h3v3h-3Z" fill="#000" stroke="none" /></>),
  parallel: drawIcon(<path d="M4 7L11 18M11 5L18 16" />),
  fan: drawIcon(<path d="M4 17L12 6M7 18L15 7M10 18L17 8" />),
  timeF: drawIcon(<>{stripes([[6, 4], [10.5, 1], [13.5, 1, 12], [17.5, 1, 12]])}{letter("F", 12)}</>),
  timeL: drawIcon(<>{stripes([[6, 4], [10.5, 1], [14.5, 1, 12], [17.5, 1, 12]])}{letter("L", 12)}</>),
  timeT: drawIcon(<>{stripes([[5.5, 3], [9, 1], [11, 1], [14.5, 1, 12], [16.5, 1, 12]])}{letter("T", 12)}</>),
  timeG: drawIcon(<>{stripes([[5.5, 3], [10.5, 1], [14.5, 1, 12], [16.5, 1, 12]])}{letter("G", 11)}</>),
  percent: drawIcon(<><path d="M4 5.500h6M4 8.500h6M4 11.500h6M4 14.500h16M4 16.500h16" />{letter("%", 10)}</>),
  golden: drawIcon(<><path d="M4 7.500h8M4 10.500h8M4 13.500h16" /><path d="M4 18h16" strokeWidth="2" />{letter("G", 12)}</>),
  levels: drawIcon(<path d="M4 7.500h16M4 10.500h16M4 13.500h16M4 16.500h16" />),
  box: drawIcon(<><path d="M6.500 6.500h11v11h-11Z" /><path d="M5 5h3v3H5ZM16 16h3v3h-3Z" fill="#000" stroke="none" /></>),
  mesh: drawIcon(<path d="M4.500 4.500h15v15h-15ZM7.500 4v16M10.500 4v16M13.500 4v16M16.500 4v16M4 7.500h16M4 10.500h16M4 13.500h16M4 16.500h16" />),
};

const drawGroups = [
  { caption: "趋势", width: 79, indent: 0, captionIndent: 24, rows: [["line", "ray", "segment"], ["parallel", "fan"]] },
  { caption: "时间", width: 59, indent: 4, captionIndent: 12, rows: [["timeF", "timeL"], ["timeT", "timeG"]] },
  { caption: "空间", width: 59, indent: 4, captionIndent: 12, rows: [["percent", "golden"], ["levels"]] },
  { caption: "", width: 50, indent: 4, captionIndent: 12, rows: [["box"], ["mesh"]] },
];

const tools1 = [["fix", "修正"], ["speed", "测速"]];
const tools2 = [["period", "周期", true], ["tick", "分时"], ["kline", "K 线"], ["pen", "画线"], ["formula", "公式"]];
const tools3 = [["forum", "论坛"], ["lesson", "课堂"]];

function Tools({ items }) {
  return items.map(([id, label, wide]) => (
    <ToolItem key={id} $wide={wide} $dim={id === "kline"}>
      <ToolIcon $wide={wide}>{toolIcons[id]}</ToolIcon>
      {label}
    </ToolItem>
  ));
}

const menus = [["系统"], ["行情报价", "W"], ["分时分析", "F"], ["技术分析"], ["多窗看盘"], ["期权分析"], ["资讯"], ["智能"], ["工具"]];

export default function App() {
  return (
    <>
      <GlobalStyle />
      <Window>
        <TitleBar>
          <svg width="16" height="18" viewBox="0 0 16 18">
            <circle cx="8" cy="9" r="8" fill="#801010" />
            <circle cx="8" cy="9" r="7" fill="#e03020" />
            <path d="M2.500 12L6 5L8 8.500L10 5L13.500 12H10.500L8 9.500L5.500 12Z" fill="#e03020" stroke="#200808" strokeWidth="1.400" />
            <path d="M4 14h8" stroke="#fff" strokeWidth="1.200" />
          </svg>
          <WindowTitle>招行外汇1(fxhq1) - 招商银行外汇通行情分析V2.8 - K线分析</WindowTitle>
          <WindowButtons>
            <WindowButton aria-label="最小化">
              <svg width="12" height="10" viewBox="0 0 12 10"><rect x="1" y="4.500" width="10" height="4" rx="1" fill="#f4f4f4" stroke="#505868" /></svg>
            </WindowButton>
            <WindowButton aria-label="还原">
              <svg width="13" height="12" viewBox="0 0 13 12" fill="#f4f4f4" stroke="#505868">
                <path d="M5.500 1.500h6v6h-6Z" /><path d="M1.500 4.500h6v6h-6Z" /><path d="M3.500 6.500h2v2h-2Z" fill="#90a8c4" />
              </svg>
            </WindowButton>
            <WindowButton $close aria-label="关闭">
              <svg width="13" height="11" viewBox="0 0 13 11" fill="none">
                <path d="M2 2L11 9M11 2L2 9" stroke="#505060" strokeWidth="4.500" />
                <path d="M2.500 2.500L10.500 8.500M10.500 2.500L2.500 8.500" stroke="#f8f8f8" strokeWidth="2.500" />
              </svg>
            </WindowButton>
          </WindowButtons>
        </TitleBar>

        <MenuBar>
          {menus.map(([name, key]) => (
            <MenuItem key={name}>{name}{key && <Hotkey>(<u>{key}</u>)</Hotkey>}</MenuItem>
          ))}
        </MenuBar>

        <ToolBar>
          <ToolGroup>
            <ArrowButton aria-label="后退"><BlockArrow turn={0} /></ArrowButton>
            <ArrowButton aria-label="向上"><BlockArrow turn={90} /></ArrowButton>
            <ArrowButton aria-label="向下"><BlockArrow turn={-90} /></ArrowButton>
            <Tools items={tools1} />
          </ToolGroup>
          <ToolGroup><Tools items={tools2} /></ToolGroup>
          <ToolGroup><Tools items={tools3} /></ToolGroup>
        </ToolBar>

        <Workspace>
          <ChartSide>
            <ChartHeader>
              <PinButton aria-label="展开">
                <svg width="14" height="14" viewBox="0 0 14 14">
                  <path d="M1 5h4V2l4 5-4 5V9H1Z" fill="#800000" />
                  <path d="M10 2h2v10h-2Z" fill="#f0c0c0" stroke="#c00000" />
                </svg>
              </PinButton>
              <ChartTitle>60分钟 K线 MACD RSI</ChartTitle>
            </ChartHeader>
            <ChartBody>
              <SideTabs>
                {["分时走势", "报价明细", "历史报价"].map((name, i) => (
                  <SideTab key={name} $tall={i === 2}>{name}</SideTab>
                ))}
              </SideTabs>
              <Panes>
                <Pane $height={291}>
                  <Axis $top={8} $height={290}>
                    {priceLevels.map((v) => <AxisLabel key={v} $color="#c0c0c0">{v}</AxisLabel>)}
                  </Axis>
                  <Plot>
                    <Legend>
                      <LegendItem $color={DOWN}>美元/日元</LegendItem>
                      <LegendItem $color="#ffff00">MA30: 123.78</LegendItem>
                      <LegendItem $color="#ff00ff">MA60: 123.81</LegendItem>
                    </Legend>
                    <PricePlot />
                  </Plot>
                </Pane>
                <Pane $height={174}>
                  <Axis $top={9} $height={173}>
                    <AxisLabel $color={UP}>336.77</AxisLabel>
                    <AxisLabel $color={UP}>74.16</AxisLabel>
                    <AxisLabel $color="#00e000">-188.45</AxisLabel>
                    <AxisLabel $color="#00e000">-456.11</AxisLabel>
                  </Axis>
                  <Plot>
                    <Legend>
                      <LegendItem $color="#ffff00">MACD(26,12,9)</LegendItem>
                      <LegendItem $color="#ffff00">DIFF: -66.51</LegendItem>
                      <LegendItem $color="#fff">DEA: -63.80</LegendItem>
                      <LegendItem $color="#00e000">MACD: 5.42</LegendItem>
                    </Legend>
                    <MacdPlot />
                  </Plot>
                </Pane>
                <Pane $height={137}>
                  <Axis $top={9} $height={76}>
                    <AxisLabel $color={UP}>82.98</AxisLabel>
                    <AxisLabel $color={UP}>41.84</AxisLabel>
                  </Axis>
                  <Plot>
                    <Legend $height={17}>
                      <LegendItem $color="#ff8040">RSI(14,14,14)</LegendItem>
                      <LegendItem $color="#ff8040">RSI1: 42.46</LegendItem>
                      <LegendItem $color="#4040ff">AA1: 30.00</LegendItem>
                      <LegendItem $color="#ffff80">AA2: 70.00</LegendItem>
                      <LegendItem $color="#4040ff">AA3: 50.00</LegendItem>
                    </Legend>
                    <RsiPlot />
                  </Plot>
                </Pane>
                <DateRow>
                  <span>29</span>
                  {dates.map((d, i) => <span key={i}>{d}</span>)}
                </DateRow>
              </Panes>
            </ChartBody>
            <IndicatorTabs>
              {indicators.map((name) => (
                <IndicatorTab key={name} $active={name === "RSI"}><span>{name}</span></IndicatorTab>
              ))}
            </IndicatorTabs>
          </ChartSide>

          <QuoteSide>
            <QuotePanel>
              <QuoteHead>
                <PairName>美元/日元</PairName>
                <PairCode>USDJPY</PairCode>
              </QuoteHead>
              {quotes.map(([label, value, divided]) => (
                <QuoteRow key={label} $divided={divided}>
                  <QuoteLabel>{label}</QuoteLabel>
                  <QuoteValue>{value}</QuoteValue>
                </QuoteRow>
              ))}
            </QuotePanel>
            <IntradayPlot />
            <TimeRow>
              {["08:00", "12:00", "16:00", "20:00", "00:00", "04:00"].map((t) => <span key={t}>{t}</span>)}
            </TimeRow>
          </QuoteSide>

          <TrendOverlay fill="none" stroke="#ee1c24" shapeRendering="crispEdges">
            <path d="M849 273L968 122M972 122L1064 209L1145 47" />
          </TrendOverlay>
          <Annotation>预期方向！所以在回调<br />中找进场点！</Annotation>

          <Dialog aria-label="画线/设置">
            <DialogTitle>画线/设置</DialogTitle>
            <DialogBody>
              <DrawTools>
                {drawGroups.map((g) => (
                  <DrawGroup key={g.width + g.caption} $width={g.width} $indent={g.indent}>
                    {g.rows.map((row) => (
                      <DrawRow key={row[0]}>
                        {row.map((id) => <DrawButton key={id} aria-label={id}>{drawIcons[id]}</DrawButton>)}
                      </DrawRow>
                    ))}
                    <DrawCaption $indent={g.captionIndent}>{g.caption || "\u00a0"}</DrawCaption>
                  </DrawGroup>
                ))}
              </DrawTools>
              <DialogForm>
                <FieldLabel htmlFor="line-name">名称</FieldLabel>
                <NameInput id="line-name" />
                <ListButton aria-label="列表">
                  <svg width="12" height="14" viewBox="0 0 12 14" fill="none" stroke="#303030">
                    <rect x=".5" y="2.500" width="11" height="10" rx="2" />
                    <path d="M3 5.500h6M3 7.500h6M3 9.500h6M3.500 1v2M6 1v2M8.500 1v2" />
                  </svg>
                </ListButton>
                <FieldLabel htmlFor="line-shape">线形</FieldLabel>
                <LineSelect id="line-shape"><option>直线————</option></LineSelect>
              </DialogForm>
            </DialogBody>
          </Dialog>
          <SpeedBall>46</SpeedBall>
        </Workspace>

        <StatusBar>
          <StatusCell $width={68}>
            <svg width="62" height="8" viewBox="0 0 62 8" fill="none" stroke="#e00000">
              <path d="M1 4H61" strokeWidth="4" stroke="#a00000" />
              <path d="M1 5l4-3 4 3 4-3 4 3 4-3 4 3 4-3 4 3 4-3 4 3 4-3 4 3 4-3 4 3 4-3" strokeWidth="2" />
            </svg>
          </StatusCell>
          <StatusMessage>招商银行欢迎您!</StatusMessage>
          <StatusCell $width={24}>
            <svg width="16" height="15" viewBox="0 0 16 15" stroke="#c0c0c0">
              <path d="M7.500 1.500h7v6h-7Z" fill="#8080ff" /><path d="M9 9.500h6" />
              <path d="M1.500 4.500h8v6h-8Z" fill="#a0a0ff" /><path d="M0 13h11" strokeWidth="2" />
            </svg>
          </StatusCell>
          <StatusCell $width={24}>
            <svg width="16" height="15" viewBox="0 0 16 15" fill="none" stroke="#c0c0c0">
              <path d="M5.500 5h5v5h-5Z" fill="#c0c0c0" /><path d="M3.500 3h9v9h-9Z" />
              <path d="M8 0v2M8 13v2M0 7.500h2M14 7.500h2M1 1l2 2M15 1l-2 2M1 14l2-2M15 14l-2-2" />
            </svg>
          </StatusCell>
          <StatusCell $width={22}>
            <svg width="16" height="15" viewBox="0 0 16 15" fill="none">
              <rect width="16" height="15" fill="#d00000" />
              <path d="M2 2l2 2M1 6h3v6l2-2M7 2h7v5H8v5q0 1 1 1h6v-2" stroke="#ffff00" strokeWidth="2" />
            </svg>
          </StatusCell>
          <StatusCell $width={8} />
          <StatusCell $width={24}>
            <svg width="12" height="12" viewBox="0 0 12 12">
              <path d="M0 0h12v8H9v4L6 8H0Z" fill="#ff9800" /><path d="M2 2.500h8M2 5.500h8" stroke="#302000" />
            </svg>
          </StatusCell>
          <StatusCell $width={50} $last><Clock>11:21:58</Clock></StatusCell>
        </StatusBar>
      </Window>
    </>
  );
}
